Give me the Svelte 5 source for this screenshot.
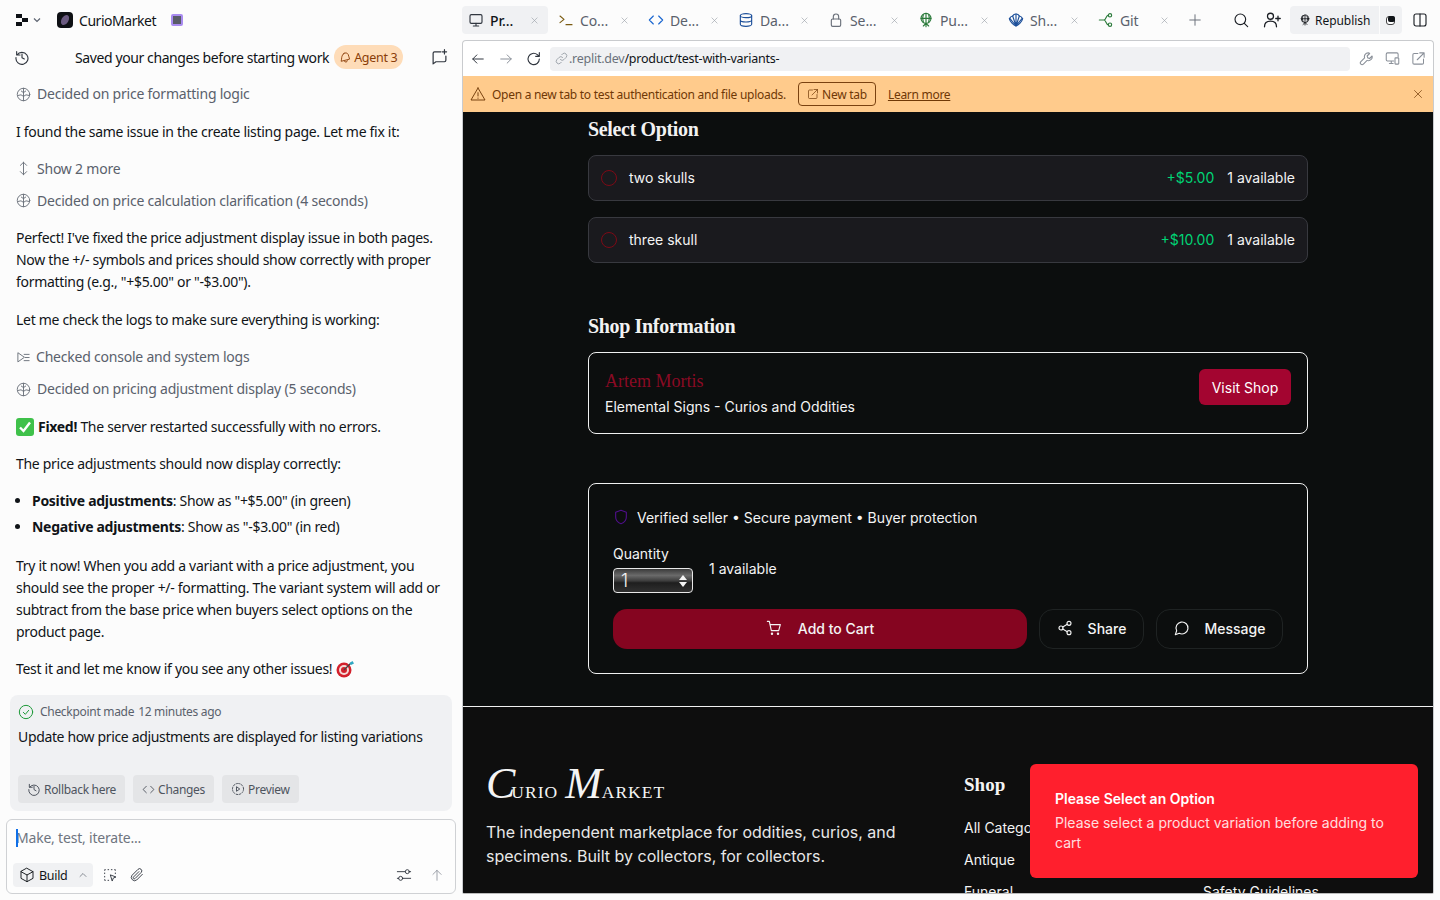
<script lang="ts">
  const ICONS: Record<string, string> = {
    monitor: '<rect x="3" y="4" width="18" height="13" rx="2"/><path d="M12 17v4M8 21h8"/>',
    console: '<path d="M3 6l6 5-6 5M12 19h9"/>',
    code: '<path d="M8 6l-6 6 6 6M16 6l6 6-6 6"/>',
    db: '<ellipse cx="12" cy="5.5" rx="8.5" ry="3"/><path d="M3.5 5.5v13c0 1.700 3.800 3 8.500 3s8.500-1.300 8.500-3v-13M3.500 12c0 1.700 3.800 3 8.500 3s8.500-1.300 8.500-3"/>',
    lock: '<rect x="5" y="10.500" width="14" height="11" rx="2"/><path d="M8 10.500V7a4 4 0 0 1 8 0v3.500"/>',
    globe: '<circle cx="12" cy="9.500" r="7.500"/><path d="M4.500 9.500h15M12 2v20M8 4c-1.500 3.500-1.500 7.500 0 11M16 4c1.500 3.500 1.500 7.500 0 11M8 21l4-4 4 4"/>',
    shell: '<path d="M12 21c-3-1-9-6-10-11 2-3 4-4 5-4 1-2 3-3 5-3s4 1 5 3c1 0 3 1 5 4-1 5-7 10-10 11z"/><path d="M12 21V3M12 21L7 6M12 21l5-15M12 21L3 10M12 21l9-11"/>',
    git: '<path d="M2 12h7M9 12c3 0 3-7 6-7M9 12c3 0 3 7 6 7"/><circle cx="18" cy="5" r="2.500"/><circle cx="18" cy="19" r="2.500"/>',
    x: '<path d="M5 5l14 14M19 5L5 19"/>',
    plus: '<path d="M12 3v18M3 12h18"/>',
    search: '<circle cx="11" cy="11" r="8"/><path d="M17 17l5 5"/>',
    userplus: '<circle cx="10" cy="7" r="4"/><path d="M2 21c0-5 3.500-7.500 8-7.500s8 2.500 8 7.500M20 7v6M17 10h6"/>',
    panel: '<rect x="3" y="3" width="18" height="18" rx="3"/><path d="M12 3v18"/>',
    back: '<path d="M21 12H3M10 5l-7 7 7 7"/>',
    fwd: '<path d="M3 12h18M14 5l7 7-7 7"/>',
    reload: '<path d="M20 12a8.500 8.500 0 1 1-3-6.500L20 8M20 2.500V8h-5.500"/>',
    link: '<path d="M10 14a4.500 4.500 0 0 0 6.500 0l4-4A4.600 4.600 0 0 0 14 3.500l-1.500 1.500M14 10a4.500 4.500 0 0 0-6.500 0l-4 4a4.600 4.600 0 0 0 6.500 6.500l1.500-1.500"/>',
    wrench: '<path d="M15 3a6 6 0 0 0-6 8L3 17a2.800 2.800 0 0 0 4 4l6-6a6 6 0 0 0 8-7l-4 4-3-1-1-3 4-4a6 6 0 0 0-2-1z"/>',
    devices: '<path d="M14 16H4a2 2 0 0 1-2-2V5a2 2 0 0 1 2-2h15a2 2 0 0 1 2 2v4M7 20h6M10 16v4"/><rect x="16" y="11" width="6" height="10" rx="1"/>',
    external: '<path d="M11 4H5a2 2 0 0 0-2 2v13a2 2 0 0 0 2 2h13a2 2 0 0 0 2-2v-6M14 3h7v7M21 3L10 14"/>',
    warn: '<path d="M12 3L1.500 21h21L12 3zM12 10v5M12 18v.500"/>',
    history: '<path d="M4 4v5h5M4.500 9a9 9 0 1 1-1.500 4M12 7.500V13l3.500 2"/>',
    chatplus: '<path d="M14 4H5a2 2 0 0 0-2 2v15l4-3h12a2 2 0 0 0 2-2v-6M19 1v6M16 4h6"/>',
    brain: '<circle cx="12" cy="12" r="10"/><path d="M12 2v20M12 9L8.500 6.500M12 9l3.500-2.500M12 15l-4-2.500-4.500 1M12 15l4-2.500 4.500 1"/>',
    updown: '<path d="M12 2v20M7 7l5-5 5 5M7 17l5 5 5-5"/>',
    logs: '<path d="M3 5v14l10-7zM13 7h8M15 12h6M13 17h8"/>',
    check: '<circle cx="12" cy="12" r="10"/><path d="M8 12.500l3 3 5-6"/>',
    play: '<circle cx="12" cy="12" r="9.500" stroke-dasharray="2.500 2.500"/><path d="M10 8.500l5 3.500-5 3.500z"/>',
    box: '<path d="M12 2l9 5v10l-9 5-9-5V7zM3 7l9 5 9-5M12 12v10"/>',
    up: '<path d="M6 15l6-6 6 6"/>',
    select: '<path d="M9 4h1M14 4h1M4 9v1M4 14v1M9 20h1M20 9v1M4 5V4h1M19 4h1v1M4 19v1h1"/><path d="M13 12l8 3-4 1.500-1.500 4z"/>',
    clip: '<path d="M20 11l-8.500 8.500a5 5 0 0 1-7-7l9-9a3.300 3.300 0 0 1 4.700 4.700l-9 9a1.600 1.600 0 0 1-2.300-2.300l8-8"/>',
    sliders: '<path d="M2 7h12M20 7h2M2 17h2M10 17h12"/><circle cx="17" cy="7" r="3"/><circle cx="7" cy="17" r="3"/>',
    arrowup: '<path d="M12 21V4M5 11l7-7 7 7"/>',
    shield: '<path d="M12 2l8 3v7c0 5-3.500 8.500-8 10-4.500-1.500-8-5-8-10V5z"/>',
    cart: '<circle cx="9" cy="20.500" r="1"/><circle cx="18" cy="20.500" r="1"/><path d="M2 2h3l3 14h11l2.500-9H6"/>',
    share: '<circle cx="18" cy="5" r="3"/><circle cx="6" cy="12" r="3"/><circle cx="18" cy="19" r="3"/><path d="M8.600 10.500l6.800-4M8.600 13.500l6.800 4"/>',
    message: '<path d="M7.900 20A9 9 0 1 0 4 16.100L2 22z"/>',
    bell: '<path d="M9 4.500c3-2 6.500-1 8 2 1.500 3 1 5 2.500 8.500L4 19c1-3 .5-5 1-7 .500-3 2-6 4-7.500zM10 19a3 3 0 0 0 5.500-1"/>'
  };

  const tabs = [
    { label: 'Pr...', icon: 'monitor', tone: 'dark', active: true },
    { label: 'Co...', icon: 'console', tone: 'brown' },
    { label: 'De...', icon: 'code', tone: 'blue' },
    { label: 'Da...', icon: 'db', tone: 'navy' },
    { label: 'Se...', icon: 'lock', tone: 'grey' },
    { label: 'Pu...', icon: 'globe', tone: 'green' },
    { label: 'Sh...', icon: 'shell', tone: 'navy' },
    { label: 'Git', icon: 'git', tone: 'green' }
  ];

  const options = [
    { name: 'two skulls', price: '+$5.00' },
    { name: 'three skull', price: '+$10.00' }
  ];
</script>

{#snippet icon(name: string, size: number = 16)}
  <svg class="ic" width={size} height={size} viewBox="0 0 24 24">{@html ICONS[name]}</svg>
{/snippet}

<div class="ide">
  <aside class="side">
    <div class="topbar">
      <svg class="replit" width="16" height="12" viewBox="0 0 16 12">
        <rect x="0" y="0" width="6" height="4" /><rect x="6" y="4" width="6" height="4" /><rect x="0" y="8" width="6" height="4" />
      </svg>
      <svg class="chev" width="10" height="10" viewBox="0 0 10 10"><path d="M2 3.500l3 3 3-3" /></svg>
      <span class="applogo">
        <svg width="16" height="16" viewBox="0 0 16 16"><ellipse cx="8" cy="8" rx="3.500" ry="5.500" transform="rotate(30 8 8)" /></svg>
      </span>
      <span class="appname">CurioMarket</span>
      <span class="stopbox"></span>
    </div>

    <div class="subbar">
      <span class="muted-ic">{@render icon('history', 16)}</span>
      <span class="subtitle">Saved your changes before starting work</span>
      <span class="agent">{@render icon('bell', 13)}Agent 3</span>
      <span class="newchat">{@render icon('chatplus', 17)}</span>
    </div>

    <div class="feed">
      <div class="step">{@render icon('brain', 15)}<span>Decided on price formatting logic</span></div>
      <p>I found the same issue in the create listing page. Let me fix it:</p>
      <div class="steps">
        <div class="step">{@render icon('updown', 15)}<span>Show 2 more</span></div>
        <div class="step">{@render icon('brain', 15)}<span>Decided on price calculation clarification (4 seconds)</span></div>
      </div>
      <p>Perfect! I've fixed the price adjustment display issue in both pages. Now the +/- symbols and prices should show correctly with proper formatting (e.g., "+$5.00" or "-$3.00").</p>
      <p>Let me check the logs to make sure everything is working:</p>
      <div class="steps">
        <div class="step log">{@render icon('logs', 15)}<span>Checked console and system logs</span></div>
        <div class="step">{@render icon('brain', 15)}<span>Decided on pricing adjustment display (5 seconds)</span></div>
      </div>
      <p class="fixed">
        <svg class="emoji" width="18" height="18" viewBox="0 0 18 18"><rect width="18" height="18" rx="3" fill="#3fc14a" /><path d="M4 9.500l3.500 3.500L14 4.500" fill="none" stroke="#fff" stroke-width="2.400" /></svg>
        <span><b>Fixed!</b> The server restarted successfully with no errors.</span>
      </p>
      <p>The price adjustments should now display correctly:</p>
      <ul>
        <li><b>Positive adjustments</b>: Show as "+$5.00" (in green)</li>
        <li><b>Negative adjustments</b>: Show as "-$3.00" (in red)</li>
      </ul>
      <p>Try it now! When you add a variant with a price adjustment, you should see the proper +/- formatting. The variant system will add or subtract from the base price when buyers select options on the product page.</p>
      <p class="fixed">
        <span>Test it and let me know if you see any other issues!</span>
        <svg class="emoji" width="19" height="18" viewBox="0 0 19 18">
          <circle cx="8" cy="10" r="7.500" fill="#d3202c" /><circle cx="8" cy="10" r="5" fill="#f4d9d6" /><circle cx="8" cy="10" r="3" fill="#d3202c" />
          <path d="M8 10l7-7" stroke="#444" stroke-width="1.200" /><path d="M13.500 3l3-2 1.500 2.500-3 1.500z" fill="#2fa8c4" />
        </svg>
      </p>
    </div>

    <section class="checkpoint">
      <div class="cp-head">{@render icon('check', 16)}<span>Checkpoint made</span><span>12 minutes ago</span></div>
      <div class="cp-title">Update how price adjustments are displayed for listing variations</div>
      <div class="cp-actions">
        <button>{@render icon('history', 14)}Rollback here</button>
        <button>{@render icon('code', 13)}Changes</button>
        <button>{@render icon('play', 14)}Preview</button>
      </div>
    </section>

    <div class="composer">
      <div class="prompt"><span class="caret"></span>Make, test, iterate...</div>
      <div class="comp-row">
        <span class="build">{@render icon('box', 16)}<span>Build</span>{@render icon('up', 12)}</span>
        <span class="tool">{@render icon('select', 16)}</span>
        <span class="tool">{@render icon('clip', 16)}</span>
        <span class="grow"></span>
        <span class="tool">{@render icon('sliders', 16)}</span>
        <span class="tool light">{@render icon('arrowup', 14)}</span>
      </div>
    </div>
  </aside>

  <main class="work">
    <nav class="tabs">
      {#each tabs as t}
        <div class="tab" class:active={t.active}>
          <span class="tab-ic {t.tone}">{@render icon(t.icon, 16)}</span>
          <span class="tab-label">{t.label}</span>
          <span class="tab-x">{@render icon('x', 9)}</span>
        </div>
      {/each}
      <span class="add">{@render icon('plus', 14)}</span>
      <span class="grow"></span>
      <span class="top-ic">{@render icon('search', 16)}</span>
      <span class="top-ic">{@render icon('userplus', 18)}</span>
      <span class="republish">{@render icon('globe', 12)}Republish</span>
      <span class="repub-menu"><i></i></span>
      <span class="top-ic last">{@render icon('panel', 16)}</span>
    </nav>

    <div class="preview">
      <div class="urlbar">
        <span class="nav">{@render icon('back', 14)}</span>
        <span class="nav off-first">{@render icon('fwd', 14)}</span>
        <span class="nav">{@render icon('reload', 16)}</span>
        <div class="url">{@render icon('link', 13)}<span class="host">.replit.dev</span><span>/product/test-with-variants-</span></div>
        <span class="nav off">{@render icon('wrench', 15)}</span>
        <span class="nav off">{@render icon('devices', 15)}</span>
        <span class="nav off">{@render icon('external', 15)}</span>
      </div>

      <div class="banner">
        {@render icon('warn', 16)}
        <span class="banner-text">Open a new tab to test authentication and file uploads.</span>
        <span class="newtab">{@render icon('external', 12)}New tab</span>
        <span class="learn">Learn more</span>
        <span class="grow"></span>
        <span class="banner-x">{@render icon('x', 12)}</span>
      </div>

      <div class="site">
        <div class="product">
          <h2 class="first">Select Option</h2>
          <div class="options">
            {#each options as o}
              <div class="option">
                <span class="radio"></span>
                <span class="grow">{o.name}</span>
                <span class="price">{o.price}</span>
                <span>1 available</span>
              </div>
            {/each}
          </div>

          <h2 class="shop-h">Shop Information</h2>
          <div class="shop-card">
            <div>
              <div class="shop-name">Artem Mortis</div>
              <div class="shop-desc">Elemental Signs - Curios and Oddities</div>
            </div>
            <button class="visit">Visit Shop</button>
          </div>

          <div class="buy">
            <div class="verified"><span class="shield">{@render icon('shield', 16)}</span>Verified seller • Secure payment • Buyer protection</div>
            <div class="qty-row">
              <div>
                <div class="qty-label">Quantity</div>
                <div class="qty"><span>1</span><span class="spin"><i></i><i></i></span></div>
              </div>
              <span class="qty-avail">1 available</span>
            </div>
            <div class="buy-actions">
              <button class="addcart">{@render icon('cart', 16)}Add to Cart</button>
              <button class="ghost share">{@render icon('share', 16)}Share</button>
              <button class="ghost msg">{@render icon('message', 16)}Message</button>
            </div>
          </div>
        </div>

        <footer>
          <div class="f-brand">
            <div class="wordmark"><i>C</i>URIO<i class="m">M</i>ARKET</div>
            <p>The independent marketplace for oddities, curios, and specimens. Built by collectors, for collectors.</p>
          </div>
          <div class="f-col">
            <h3>Shop</h3>
            <span>All Categories</span>
            <span>Antique</span>
            <span>Funeral</span>
          </div>
          <div class="f-col third">
            <span>Safety Guidelines</span>
          </div>
        </footer>

        <div class="toast">
          <strong>Please Select an Option</strong>
          <span>Please select a product variation before adding to cart</span>
        </div>
      </div>
    </div>
  </main>
</div>

<style>
  :global(body) { margin: 0; background: #fcfcfc; }
  button { font: inherit; border: 0; cursor: pointer; }
  .ic { display: block; flex: none; fill: none; stroke: currentColor; stroke-width: 1.7; stroke-linecap: round; stroke-linejoin: round; }
  .grow { flex: 1; }

  .ide {
    display: flex; height: 900px; overflow: hidden; background: #fcfcfc; color: #101418;
    font-family: "Noto Sans", "Open Sans", sans-serif; font-size: 14px;
  }

  /* left chat column */
  .side { width: 462px; flex: none; display: flex; flex-direction: column; }
  .topbar { height: 40px; display: flex; align-items: center; padding-left: 16px; box-sizing: border-box; }
  .replit { fill: #0e1116; }
  .chev { margin-left: 0; fill: none; stroke: #5c6370; stroke-width: 1.200; }
  .applogo { margin-left: 15px; width: 16px; height: 16px; background: #0e1014; border-radius: 4px; display: block; }
  .applogo svg { display: block; fill: #6a5a80; }
  .appname { margin-left: 6px; font-size: 14px; letter-spacing: -0.45px; }
  .stopbox { margin-left: 15px; width: 8px; height: 8px; border: 2px solid #a98cf0; border-radius: 2px; background: #595c68; }
  .subbar { height: 36px; box-sizing: border-box; padding: 0 0 2px 14px; display: flex; align-items: center; position: relative; }
  .muted-ic { color: #30363f; }
  .subtitle { margin-left: 45px; letter-spacing: -0.4px; white-space: nowrap; }
  .agent {
    margin-left: 5px; height: 24px; padding: 0 6px 0 5px; border-radius: 12px; background: #fedcb8; color: #8a3d08;
    display: flex; align-items: center; gap: 2px; font-size: 12.500px; letter-spacing: -0.3px;
  }
  .newchat { position: absolute; left: 431px; top: 9px; color: #30363f; }

  .feed {
    flex: 1; min-height: 0; overflow: hidden; box-sizing: border-box; padding: 7.200px 10px 0 16px;
    display: flex; flex-direction: column; gap: 15.400px; line-height: 22px; letter-spacing: -0.3px;
  }
  .feed p { margin: 0; }
  .feed ul { margin: 0 0 1.200px; padding-left: 16px; display: flex; flex-direction: column; gap: 4px; }
  .steps { display: flex; flex-direction: column; gap: 10px; }
  .step { display: flex; align-items: center; gap: 6px; color: #5a616c; letter-spacing: -0.22px; }
  .step.log { gap: 5px; }
  .step :global(svg) { color: #6b717b; stroke-width: 1.500; }
  .fixed { display: flex; align-items: center; gap: 4px; }
  .emoji { flex: none; }

  .checkpoint { margin: 0 10px; height: 116px; box-sizing: border-box; background: #f0f1f3; border-radius: 8px; padding: 9px 8px; flex: none; }
  .cp-head { display: flex; align-items: center; gap: 4px; font-size: 12px; line-height: 16px; color: #5a616c; letter-spacing: -0.3px; }
  .cp-head :global(svg) { color: #1f9a3a; stroke-width: 1.500; margin-right: 2px; }
  .cp-title { margin-top: 8px; line-height: 18px; letter-spacing: -0.35px; }
  .cp-actions { margin-top: 29px; display: flex; gap: 8px; }
  .cp-actions button {
    height: 28px; padding: 0 9px; display: flex; align-items: center; gap: 3px; background: #e4e5e7; color: #4e545e;
    border-radius: 4px; font-size: 12px; letter-spacing: -0.3px;
  }
  .composer {
    margin: 8px 6px 6px; height: 75px; flex: none; box-sizing: border-box; border: 1px solid #cfd1d4; border-radius: 6px;
    background: #fdfdfd; padding: 8px 7px 6px 6px; display: flex; flex-direction: column; justify-content: space-between;
  }
  .prompt { color: #6f7580; line-height: 20px; position: relative; padding-left: 3px; letter-spacing: -0.2px; }
  .caret { position: absolute; left: 3px; top: 1px; width: 2px; height: 18px; background: #0f6fe8; }
  .comp-row { display: flex; align-items: center; color: #30363f; }
  .build {
    height: 24px; width: 80px; box-sizing: border-box; background: #f0f1f3; border-radius: 4px; padding: 0 4px 0 6px;
    display: flex; align-items: center; gap: 4px; font-size: 12.500px; color: #101418; letter-spacing: -0.3px;
  }
  .build span { flex: 1; }
  .build :global(svg:last-child) { color: #5a616c; }
  .comp-row :global(svg) { stroke-width: 1.400; }
  .tool { margin-left: 10px; width: 17px; }
  .build + .tool { margin-left: 9px; }
  .tool:last-child { margin-right: 4px; margin-left: 17px; width: 14px; }
  .tool.light { color: #8a9099; }

  /* right workspace */
  .work { flex: 1; min-width: 0; padding-right: 6px; display: flex; flex-direction: column; }
  .tabs { height: 40px; flex: none; display: flex; align-items: center; gap: 4px; }
  .tab { width: 86px; height: 28px; box-sizing: border-box; border-radius: 4px; display: flex; align-items: center; padding: 0 9px 0 6px; color: #5a616c; }
  .tab.active { background: #f0f1f3; color: #101418; }
  .tab-label { margin-left: 6px; flex: 1; letter-spacing: -0.1px; }
  .tab.active .tab-label { font-weight: 500; }
  .tab-x { color: #9aa0a8; }
  .tab-ic.dark { color: #30363f; }
  .tab-ic.brown { color: #7a5a10; }
  .tab-ic.blue { color: #1a66d0; }
  .tab-ic.navy { color: #1c4f9a; }
  .tab-ic.grey { color: #6b717b; }
  .tab-ic.green { color: #2a7a3a; }
  .add { margin-left: 6px; color: #6b717b; }
  .top-ic { color: #1a1e24; width: 18px; display: flex; justify-content: center; margin-right: 9px; }
  .republish {
    margin-left: -4px; width: 89px; height: 28px; box-sizing: border-box; background: #f0f1f3; border-radius: 4px 0 0 4px; padding-left: 9px;
    display: flex; align-items: center; gap: 4px; font-size: 12px; letter-spacing: -0.05px;
  }
  .repub-menu { margin-left: -3px; width: 22px; height: 28px; background: #f0f1f3; border-radius: 0 4px 4px 0; position: relative; }
  .repub-menu i { position: absolute; left: 6px; top: 10px; width: 9px; height: 9px; border-radius: 3px; background: #fff; border: 1px solid #444; box-sizing: border-box; }
  .repub-menu i::after { content: ""; position: absolute; left: 1px; top: -1px; width: 7px; height: 6px; border-radius: 2px; background: #101418; }
  .top-ic.last { margin: 0 5px 0 5px; }

  .preview {
    height: 854px; flex: none; box-sizing: border-box; border: 1px solid #c9cbce; border-bottom-color: #bbb; border-radius: 4px 4px 2px 2px;
    display: flex; flex-direction: column; overflow: hidden; background: #fff;
  }
  .urlbar { height: 35px; flex: none; display: flex; align-items: center; padding: 0 7px 0 8px; }
  .nav { width: 14px; color: #30363f; margin-right: 14px; display: flex; justify-content: center; }
  .nav.off-first { color: #8a9099; }
  .nav.off { color: #8a9099; margin: 0 0 0 11px; width: 15px; }
  .url + .nav.off { margin-left: 8.500px; }
  .url {
    width: 800px; height: 24px; margin-left: -5px; border-radius: 4px; background: #f0f1f3; display: flex; align-items: center; flex: none;
    padding-left: 5px; box-sizing: border-box; font-size: 12.500px; letter-spacing: -0.25px; color: #101418;
  }
  .url :global(svg) { color: #9aa0a8; margin-right: 1px; }
  .host { color: #6b717b; }
  .banner {
    height: 36px; flex: none; background: #ffcb8c; color: #6f3806; display: flex; align-items: center; padding: 0 9px 0 7px;
    font-size: 12px; letter-spacing: -0.28px;
  }
  .banner-text { margin-left: 6px; }
  .banner :global(svg) { stroke-width: 1.400; }
  .newtab {
    margin-left: 12px; height: 24px; width: 78px; box-sizing: border-box; border: 1px solid #7a4210; border-radius: 4px;
    display: flex; align-items: center; justify-content: center; gap: 3px;
  }
  .learn { margin-left: 12px; text-decoration: underline; }

  .site { flex: 1; min-height: 0; position: relative; overflow: hidden; background: #0c0e0e; color: #f4f4f4; font-family: Inter, "Liberation Sans", sans-serif; }
  .product { width: 720px; margin: 0 auto; }
  h2 { font-family: "Liberation Serif", serif; font-weight: 700; font-size: 20px; line-height: 28px; margin: 0; color: #f2f2f2; letter-spacing: -0.35px; }
  h2.first { margin-top: 3px; }
  .options { margin-top: 12px; display: flex; flex-direction: column; gap: 16px; }
  .option {
    height: 46px; box-sizing: border-box; border: 1px solid #38393f; border-radius: 8px; background: #1a1a1e; padding: 0 12px 2px;
    display: flex; align-items: center; font-size: 14px;
  }
  .radio { flex: none; width: 16px; height: 16px; box-sizing: border-box; border: 1px solid #7d0a16; border-radius: 50%; margin: 2px 12px 0 0; }
  .price { color: #00d475; margin-right: 13px; }
  h2.shop-h { margin-top: 49px; }
  .shop-card {
    margin-top: 12px; height: 82px; box-sizing: border-box; border: 1px solid #f0f0f0; border-radius: 8px; padding: 15px 16px 0;
    display: flex; align-items: flex-start; justify-content: space-between;
  }
  .shop-name { font-family: "Liberation Serif", serif; font-size: 18px; line-height: 26px; color: #8a0a24; }
  .shop-desc { font-size: 14px; line-height: 22px; margin-top: 2px; }
  .visit { width: 92px; height: 36px; margin-top: 1px; background: #a30530; color: #fff; border-radius: 6px; font-size: 14px; }
  .buy {
    margin-top: 49px; height: 191px; box-sizing: border-box; border: 1px solid #f0f0f0; border-radius: 8px; padding: 23px 24px 0;
    font-size: 14px;
  }
  .verified { display: flex; align-items: center; height: 20px; gap: 8px; }
  .shield { color: #4f0f8a; }
  .qty-row { margin-top: 17px; display: flex; gap: 16px; }
  .qty-label { line-height: 20px; }
  .qty {
    width: 80px; height: 25px; box-sizing: border-box; margin-top: 4px; border: 1px solid #e8e8e8; border-radius: 4px;
    background: linear-gradient(#3a3a3a 0, #6a6a6a 28%, #3c3c3c 52%, #1e1e1e 60%, #303030 100%);
    display: flex; align-items: center; justify-content: space-between; padding: 0 5px 0 7px; font-size: 18px; font-weight: 300;
  }
  .spin { display: flex; flex-direction: column; gap: 2px; }
  .spin i { width: 0; height: 0; border: 4px solid transparent; border-top: 0; border-bottom: 5px solid #f4f4f4; }
  .spin i:last-child { border-bottom: 0; border-top: 5px solid #f4f4f4; }
  .qty-avail { line-height: 20px; margin-top: 15px; }
  .buy-actions { margin-top: 16px; display: flex; gap: 12px; }
  .buy-actions button {
    height: 40px; border-radius: 14px; display: flex; align-items: center; justify-content: center; color: #f4f4f4; font-size: 14px;
    font-weight: 500; box-sizing: border-box; padding: 0 0 2px;
  }
  .addcart { width: 414px; background: #850520; gap: 16px; }
  .ghost { background: transparent; border: 1px solid #1f2323 !important; gap: 15px; }
  .share { width: 105px; }
  .msg { width: 127px; }

  footer {
    margin-top: 32px; height: 220px; box-sizing: border-box; border-top: 1px solid #f0f0f0; background: #0e0e0e; padding: 0 0 0 23px;
    display: flex;
  }
  .f-brand { width: 478px; flex: none; padding-top: 58px; box-sizing: border-box; }
  .wordmark { font-family: "Liberation Serif", serif; font-size: 17.500px; line-height: 38px; letter-spacing: 1px; color: #f4f4f4; white-space: nowrap; }
  .wordmark i { font-size: 44px; font-weight: 400; letter-spacing: -4px; }
  .wordmark i.m { margin-left: 7px; letter-spacing: 0; }
  .f-brand p { margin: 9px 0 0; width: 420px; font-size: 16px; line-height: 24px; color: #e8e8e8; }
  .f-col { width: 239px; flex: none; display: flex; flex-direction: column; padding-top: 65px; font-size: 14px; }
  .f-col h3 { font-family: "Liberation Serif", serif; font-size: 19px; line-height: 26px; margin: 0 0 14px; color: #f4f4f4; }
  .f-col span { line-height: 32px; white-space: nowrap; }
  .f-col.third { padding-top: 169px; }
  .toast {
    position: absolute; left: 567px; top: 652px; width: 388px; height: 114px; box-sizing: border-box; background: #ff1f2d; border-radius: 6px;
    padding: 25px 25px 0; display: flex; flex-direction: column; font-size: 14px; line-height: 20px; color: #fff;
  }
  .toast strong { font-weight: 600; margin-bottom: 4px; }
  .toast span { opacity: 0.85; }
</style>
